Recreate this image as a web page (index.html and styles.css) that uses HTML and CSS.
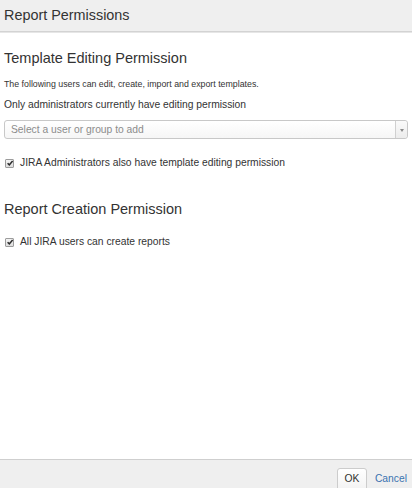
FILE: index.html
```html
<!DOCTYPE html>
<html lang="en">
<head>
<meta charset="utf-8">
<title>Report Permissions</title>
<link rel="stylesheet" href="styles.css">
</head>
<body>
<div class="dialog">
  <header class="dlg-header">
    <h1 class="dlg-title">Report Permissions</h1>
  </header>
  <main class="dlg-body">
    <h2 class="section-title first">Template Editing Permission</h2>
    <p class="desc">The following users can edit, create, import and export templates.</p>
    <p class="note">Only administrators currently have editing permission</p>
    <div class="select">
      <span class="select-text">Select a user or group to add</span>
      <span class="select-arrow"><span class="tri"></span></span>
    </div>
    <label class="check">
      <span class="box"><svg viewBox="0 0 8 8" width="8" height="8"><path d="M1.6 4.2 L3.3 5.9 L6.6 1.9" fill="none" stroke="#2b2b2b" stroke-width="1.5"/></svg></span>
      <span class="check-label">JIRA Administrators also have template editing permission</span>
    </label>
    <h2 class="section-title second">Report Creation Permission</h2>
    <label class="check check-2">
      <span class="box"><svg viewBox="0 0 8 8" width="8" height="8"><path d="M1.6 4.2 L3.3 5.9 L6.6 1.9" fill="none" stroke="#2b2b2b" stroke-width="1.5"/></svg></span>
      <span class="check-label">All JIRA users can create reports</span>
    </label>
  </main>
  <footer class="dlg-footer">
    <button class="btn" type="button">OK</button>
    <a class="cancel" href="#">Cancel</a>
  </footer>
</div>
</body>
</html>
```

FILE: styles.css
```css
html, body {
  margin: 0;
  padding: 0;
  background: #ffffff;
}
body {
  font-family: "Liberation Sans", Arial, sans-serif;
  color: #333333;
}
.dialog {
  width: 412px;
  height: 488px;
  display: flex;
  flex-direction: column;
  overflow: hidden;
}
.dlg-header {
  height: 31px;
  background: #efefef;
  border-bottom: 1px solid #d3d3d3;
  box-shadow: 0 1px 0 #e6e6e6;
  padding: 0 4px;
  flex: none;
}
.dlg-title {
  margin: 0;
  font-size: 14.4px;
  font-weight: normal;
  line-height: 31px;
  color: #333333;
}
.dlg-body {
  flex: 1;
  padding: 1px 4px 0 4px;
}
.section-title {
  margin: 0;
  font-size: 14.5px;
  font-weight: normal;
  line-height: 18px;
  color: #333333;
}
.section-title.first {
  margin-top: 16px;
}
.section-title.second {
  margin-top: 31px;
}
.desc {
  margin: 12px 0 0 0;
  font-size: 8.8px;
  line-height: 11px;
}
.note {
  margin: 8px 0 0 0;
  font-size: 10.3px;
  line-height: 13px;
}
.select {
  margin-top: 9px;
  height: 17px;
  border: 1px solid #c8c8c8;
  border-radius: 3px;
  background: linear-gradient(#ffffff, #f6f6f6);
  display: flex;
  align-items: stretch;
}
.select-text {
  flex: 1;
  padding-left: 6px;
  font-size: 10.3px;
  line-height: 17px;
  color: #8c8c8c;
}
.select-arrow {
  width: 11px;
  border-left: 1px solid #d0d0d0;
  display: flex;
  align-items: center;
  justify-content: center;
  background: linear-gradient(#fafafa, #ececec);
  border-radius: 0 3px 3px 0;
}
.tri {
  width: 0;
  height: 0;
  border-left: 2px solid transparent;
  border-right: 2px solid transparent;
  border-top: 3px solid #8a8a8a;
  margin-top: 1px;
}
.check {
  display: flex;
  align-items: center;
  margin-top: 17px;
  margin-left: 1px;
}
.check-2 {
  margin-top: 17px;
}
.box {
  width: 7px;
  height: 7px;
  border: 1px solid #9c9c9c;
  border-radius: 1px;
  background: linear-gradient(#f4f4f4, #dcdcdc);
  position: relative;
  flex: none;
  margin-right: 6px;
  margin-top: 1px;
}
.box svg {
  position: absolute;
  left: 0;
  top: -1px;
}
.check-label {
  font-size: 10.3px;
  line-height: 13px;
}
.dlg-footer {
  flex: none;
  border-top: 1px solid #cfcfcf;
  background: #efefef;
  display: flex;
  justify-content: flex-end;
  align-items: flex-start;
  padding: 8px 5px 0 0;
  box-sizing: border-box;
  height: 29px;
  overflow: hidden;
}
.btn {
  font-family: "Liberation Sans", Arial, sans-serif;
  font-size: 10.3px;
  line-height: 20px;
  height: 24px;
  padding: 0 7px;
  margin: 0;
  border: 1px solid #cccccc;
  border-radius: 3px;
  background: linear-gradient(#ffffff, #f2f2f2);
  color: #333333;
  width: 30px;
  display: flex;
  align-items: flex-start;
  justify-content: center;
}
.cancel {
  margin-left: 8px;
  font-size: 10.3px;
  line-height: 22px;
  color: #3b73af;
  text-decoration: none;
}
```
